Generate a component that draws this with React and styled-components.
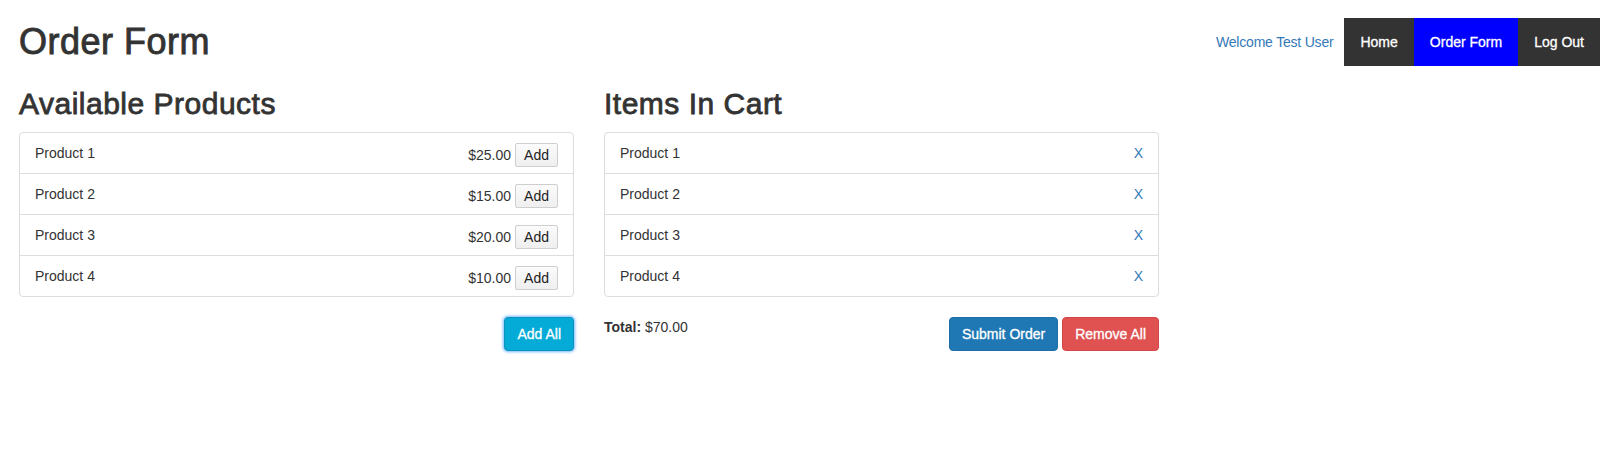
import React from "react";
import styled, { createGlobalStyle } from "styled-components";

const Global = createGlobalStyle`
  html, body { margin: 0; padding: 0; background: #fff; }
  body {
    font-family: "Liberation Sans", Helvetica, Arial, sans-serif;
    font-size: 14px;
    line-height: 20px;
    color: #333;
  }
  * { box-sizing: border-box; }
`;

const Page = styled.div`
  padding: 18px 6px 40px 19px;
`;

const Header = styled.header`
  display: flex;
  justify-content: space-between;
  align-items: flex-start;
`;

const Title = styled.h1`
  margin: 4px 0 0;
  font-size: 36px;
  line-height: 39.6px;
  font-weight: 500;
  letter-spacing: 0.5px;
  -webkit-text-stroke: 0.9px #333;
`;

const NavGroup = styled.div`
  display: flex;
  align-items: center;
  height: 48px;
`;

const Welcome = styled.a`
  color: #337ab7;
  text-decoration: none;
  margin-right: 11px;
  letter-spacing: -0.2px;
`;

const NavBar = styled.nav`
  display: flex;
  height: 48px;
  background: #333;
`;

const NavItem = styled.a`
  display: flex;
  align-items: center;
  padding: 0 16px;
  color: #fff;
  text-decoration: none;
  -webkit-text-stroke: 0.3px #fff;
  background: ${(p) => (p.$active ? "#0000ff" : "#333")};
`;

const Columns = styled.main`
  display: grid;
  grid-template-columns: 555px 555px;
  column-gap: 30px;
  margin-top: 21px;
`;

const Column = styled.section`
  display: flex;
  flex-direction: column;
`;

const SectionTitle = styled.h2`
  margin: 0 0 11px;
  font-size: 30px;
  line-height: 34px;
  font-weight: 500;
  letter-spacing: 0.5px;
  -webkit-text-stroke: 0.8px #333;
`;

const List = styled.ul`
  list-style: none;
  margin: 0;
  padding: 0;
  border: 1px solid #ddd;
  border-radius: 4px;
`;

const Row = styled.li`
  display: flex;
  justify-content: space-between;
  align-items: flex-start;
  height: 41px;
  padding: 10px 15px;
  border-bottom: 1px solid #ddd;
  &:last-child {
    height: 40px;
    border-bottom: none;
  }
`;

const Name = styled.span`
  line-height: 20px;
`;

const PriceGroup = styled.span`
  display: flex;
  align-items: center;
  gap: 4px;
  height: 24px;
`;

const SmallButton = styled.button`
  font-family: inherit;
  font-size: 14px;
  color: #222;
  height: 24px;
  padding: 0 8px;
  border: 1px solid #cfcfcf;
  border-radius: 2px;
  background: linear-gradient(#fbfbfb, #efefef);
  cursor: pointer;
`;

const RemoveLink = styled.a`
  color: #337ab7;
  text-decoration: none;
  line-height: 20px;
`;

const Footer = styled.div`
  display: flex;
  justify-content: ${(p) => (p.$end ? "flex-end" : "space-between")};
  align-items: flex-start;
  margin-top: 20px;
`;

const Total = styled.p`
  margin: 0;
  line-height: 20px;
`;

const Actions = styled.div`
  display: flex;
  gap: 4px;
`;

const tones = {
  info: { bg: "#03abd6", border: "#0b93bb", shadow: "0 0 3px 1px rgba(70, 160, 255, 0.75)" },
  primary: { bg: "#1f78b4", border: "#1d6ea6", shadow: "none" },
  danger: { bg: "#e05252", border: "#d64545", shadow: "none" },
};

const Button = styled.button`
  font-family: inherit;
  font-size: 14px;
  line-height: 20px;
  height: 34px;
  padding: 6px 12px;
  color: #fff;
  -webkit-text-stroke: 0.3px #fff;
  border-radius: 4px;
  border: 1px solid ${(p) => tones[p.$tone].border};
  background: ${(p) => tones[p.$tone].bg};
  box-shadow: ${(p) => tones[p.$tone].shadow};
  cursor: pointer;
`;

const products = [
  { name: "Product 1", price: "$25.00" },
  { name: "Product 2", price: "$15.00" },
  { name: "Product 3", price: "$20.00" },
  { name: "Product 4", price: "$10.00" },
];

export default function App() {
  return (
    <>
      <Global />
      <Page>
        <Header>
          <Title>Order Form</Title>
          <NavGroup>
            <Welcome href="#">Welcome Test User</Welcome>
            <NavBar>
              <NavItem href="#">Home</NavItem>
              <NavItem href="#" $active>
                Order Form
              </NavItem>
              <NavItem href="#">Log Out</NavItem>
            </NavBar>
          </NavGroup>
        </Header>
        <Columns>
          <Column>
            <SectionTitle>Available Products</SectionTitle>
            <List>
              {products.map((p) => (
                <Row key={p.name}>
                  <Name>{p.name}</Name>
                  <PriceGroup>
                    <span>{p.price}</span>
                    <SmallButton>Add</SmallButton>
                  </PriceGroup>
                </Row>
              ))}
            </List>
            <Footer $end>
              <Button $tone="info">Add All</Button>
            </Footer>
          </Column>
          <Column>
            <SectionTitle>Items In Cart</SectionTitle>
            <List>
              {products.map((p) => (
                <Row key={p.name}>
                  <Name>{p.name}</Name>
                  <RemoveLink href="#">X</RemoveLink>
                </Row>
              ))}
            </List>
            <Footer>
              <Total>
                <strong>Total:</strong> $70.00
              </Total>
              <Actions>
                <Button $tone="primary">Submit Order</Button>
                <Button $tone="danger">Remove All</Button>
              </Actions>
            </Footer>
          </Column>
        </Columns>
      </Page>
    </>
  );
}
